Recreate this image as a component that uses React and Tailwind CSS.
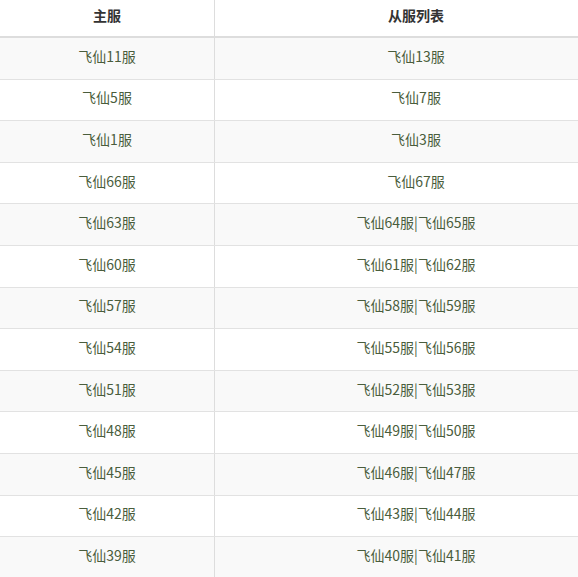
import React from 'react';

const rows = [
  ['飞仙11服', '飞仙13服'],
  ['飞仙5服', '飞仙7服'],
  ['飞仙1服', '飞仙3服'],
  ['飞仙66服', '飞仙67服'],
  ['飞仙63服', '飞仙64服|飞仙65服'],
  ['飞仙60服', '飞仙61服|飞仙62服'],
  ['飞仙57服', '飞仙58服|飞仙59服'],
  ['飞仙54服', '飞仙55服|飞仙56服'],
  ['飞仙51服', '飞仙52服|飞仙53服'],
  ['飞仙48服', '飞仙49服|飞仙50服'],
  ['飞仙45服', '飞仙46服|飞仙47服'],
  ['飞仙42服', '飞仙43服|飞仙44服'],
  ['飞仙39服', '飞仙40服|飞仙41服'],
];

const App = () => {
  return (
    <div className="w-[578px] h-[577px] overflow-hidden bg-white text-[14px] font-['Noto_Sans_CJK_SC',sans-serif]">
      <div className="w-[617px]">
        <div className="grid grid-cols-[215px_1fr] h-[38px] border-b-2 border-[#dddddd] font-bold text-[#333333]">
          <div className="flex items-center justify-center pb-[5px] border-r border-[#dddddd]">主服</div>
          <div className="flex items-center justify-center pb-[5px]">从服列表</div>
        </div>
        {rows.map(([main, subs], i) => (
          <div
            key={main}
            className={`grid grid-cols-[215px_1fr] h-[41.6px] border-b border-[#e2e2e2] text-[#4a5d3c] ${i % 2 === 0 ? 'bg-[#f9f9f9]' : 'bg-white'}`}
          >
            <div className="flex items-center justify-center pb-[4px] border-r border-[#dddddd]">{main}</div>
            <div className="flex items-center justify-center pb-[4px]">{subs}</div>
          </div>
        ))}
      </div>
    </div>
  );
};

export default App;
